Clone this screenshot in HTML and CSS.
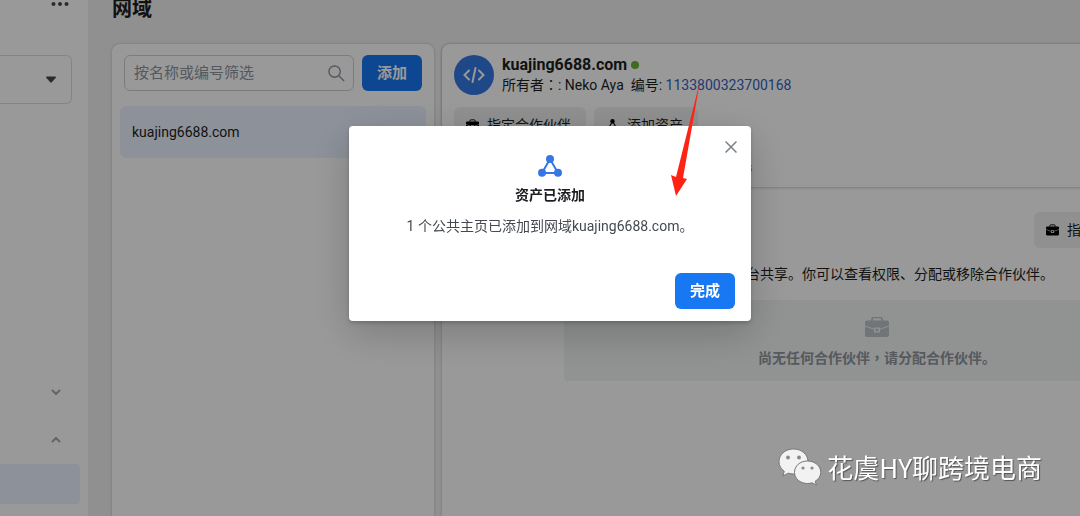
FILE: index.html
```html
<!DOCTYPE html>
<html lang="zh-CN">
<head>
<meta charset="utf-8">
<title>网域</title>
<link rel="stylesheet" href="styles.css">
</head>
<body>
<svg class="symbols" aria-hidden="true">
  <symbol id="briefcase" viewBox="0 0 24 20">
    <path d="M7 4V2.600Q7 .5 9 .5h6q2 0 2 2.100V4" fill="none" stroke="currentColor" stroke-width="1.700"/>
    <path d="M2 3.500h20q2 0 2 2V8.500l-9 3.300v-1.300H9v1.300L0 8.500V5.500q0-2 2-2z"/>
    <path d="M0 9.500l9 3.300V15.500h6v-2.700l9-3.300V18q0 2-2 2H2q-2 0-2-2z"/>
    <path d="M10.500 11.800h3v2.400h-3z"/>
  </symbol>
  <symbol id="nodes" viewBox="0 0 24 22">
    <path d="M12 4L4 18h16z" fill="none" stroke="currentColor" stroke-width="2"/>
    <circle cx="12" cy="4" r="4"/><circle cx="4" cy="17.800" r="4"/><circle cx="20" cy="17.800" r="4"/>
  </symbol>
</svg>
<div class="app">
  <nav class="sidebar">
    <button class="icon-button more" aria-label="更多"><svg width="18" height="6" viewBox="0 0 18 6"><circle cx="2.500" cy="3" r="2"/><circle cx="9" cy="3" r="2"/><circle cx="15.500" cy="3" r="2"/></svg></button>
    <button class="account" aria-label="选择账户"><svg width="10" height="7" viewBox="0 0 10 7"><path d="M1 .5h8q1 0 1 1L6 6Q5 7 4 6L0 1.500q0-1 1-1z"/></svg></button>
    <div class="groups">
      <button class="icon-button group" aria-label="展开"><svg width="10" height="6" viewBox="0 0 10 6"><path d="M1 1l4 4 4-4"/></svg></button>
      <button class="icon-button group" aria-label="收起"><svg width="10" height="6" viewBox="0 0 10 6"><path d="M1 5l4-4 4 4"/></svg></button>
      <a class="current" href="#" aria-label="网域"></a>
    </div>
  </nav>
  <main class="main">
    <h1 class="page-title">网域</h1>
    <div class="columns">
      <section class="card list">
        <div class="tools">
          <label class="search">
            <input type="text" placeholder="按名称或编号筛选" aria-label="按名称或编号筛选">
            <svg width="17" height="17" viewBox="0 0 18 18"><circle cx="7" cy="7" r="6"/><path d="M11.500 11.500L17 17"/></svg>
          </label>
          <button class="primary">添加</button>
        </div>
        <a class="domain" href="#">kuajing6688.com</a>
      </section>
      <section class="card detail">
        <header class="detail-header">
          <div class="identity">
            <div class="avatar"><svg width="22" height="18" viewBox="0 0 22 18"><path d="M6 4.500L1.500 9 6 13.500M16 4.500L20.500 9 16 13.500M12.500 2l-3 14"/></svg></div>
            <div>
              <h2 class="name">kuajing6688.com<span class="status"></span></h2>
              <p class="meta">所有者<span class="mid" lang="zh-TW">：</span>: Neko Aya&nbsp; 编号: <a href="#">1133800323700168</a></p>
            </div>
          </div>
          <div class="actions">
            <button class="secondary"><svg width="13" height="12"><use href="#briefcase"/></svg>指定合作伙伴</button>
            <button class="secondary"><svg width="13" height="12"><use href="#nodes"/></svg>添加资产</button>
          </div>
          <a class="more-link" href="#">s</a>
        </header>
        <div class="partners">
          <button class="secondary assign"><svg width="13" height="12"><use href="#briefcase"/></svg>指定合作伙伴</button>
          <p class="hint">台共享。你可以查看权限、分配或移除合作伙伴。</p>
          <div class="empty"><svg width="24" height="20"><use href="#briefcase"/></svg><p>尚无任何合作伙伴<span class="mid" lang="zh-TW">，</span>请分配合作伙伴。</p></div>
        </div>
      </section>
    </div>
  </main>
</div>
<div class="overlay">
  <div class="dialog" role="dialog" aria-labelledby="dialog-title">
    <button class="icon-button close" aria-label="关闭"><svg width="12" height="12" viewBox="0 0 12 12"><path d="M.5.5l11 11M11.500.5l-11 11"/></svg></button>
    <svg class="dialog-icon" width="24" height="22"><use href="#nodes"/></svg>
    <h2 id="dialog-title">资产已添加</h2>
    <p>1 个公共主页已添加到网域kuajing6688.com。</p>
    <button class="primary done">完成</button>
  </div>
</div>
<svg class="arrow" width="32" height="116" viewBox="0 0 32 116" aria-hidden="true"><path d="M31 0L14 97l4 1-11 17L2 94l5 2z"/></svg>
<div class="watermark">
  <svg width="44" height="38" viewBox="0 0 44 38" aria-hidden="true">
    <path class="bubble" d="M15.500 1C7 1 1 6.700 1 13.700c0 4 2 7.300 5.300 9.600L4.800 28l5.500-2.800c1.700.5 3.400.8 5.200.8C24 26 30 20.700 30 13.700S24 1 15.500 1z"/>
    <circle class="eye" cx="10" cy="9.500" r="1.900"/><circle class="eye" cx="21" cy="9.500" r="1.900"/>
    <path class="bubble" d="M29.500 13C22 13 16.500 18 16.500 24.300s5.500 11.200 13 11.200c1.700 0 3.200-.2 4.600-.7l4.300 2.400-1.200-4c3.400-2 5.600-5.200 5.600-8.900C42.800 18 37 13 29.500 13z"/>
    <circle class="eye" cx="25" cy="20" r="1.600"/><circle class="eye" cx="34" cy="20" r="1.600"/>
  </svg>
  <span>花虞HY聊跨境电商</span>
</div>
</body>
</html>
```
FILE: styles.css
```css
* { box-sizing: border-box; }
body {
  margin: 0;
  height: 100vh;
  overflow: hidden;
  background: #f0f0f0;
  color: #1c1e21;
  font: 14px/20px Roboto, "Noto Sans CJK SC", sans-serif;
}
h1, h2, p { margin: 0; }
button, input { font: inherit; color: inherit; }
button { white-space: nowrap; }
a { color: #385898; text-decoration: none; }
svg { flex: none; fill: currentColor; }
.symbols { position: absolute; width: 0; height: 0; }
.app { display: flex; height: 100%; overflow: hidden; }

.sidebar {
  flex: none;
  display: flex;
  flex-direction: column;
  width: 88px;
  padding-right: 8px;
  background: #fff;
}
.icon-button { display: flex; padding: 0; border: 0; background: none; }
.more { align-self: flex-end; margin: 1px 11px 48px 0; color: #444950; }
.account {
  display: flex;
  align-items: center;
  justify-content: flex-end;
  height: 49px;
  margin-right: 8px;
  padding: 0 15px;
  border: 1px solid #dadde1;
  border-left: 0;
  border-radius: 0 6px 6px 0;
  background: #fff;
  color: #444950;
}
.groups { display: flex; flex-direction: column; margin-top: 264px; }
.group { align-items: center; justify-content: flex-end; height: 48px; padding-right: 19px; }
.group path { fill: none; stroke: #a4a8ae; stroke-width: 2; }
.current { height: 40px; border-radius: 0 4px 4px 0; background: #ebf2ff; }

.main {
  flex: 1 0 auto;
  width: calc(100% + 34px);
  display: flex;
  flex-direction: column;
  gap: 23px;
  padding-left: 24px;
  margin-top: -3px;
}
.page-title { font-size: 20px; line-height: 24px; }
.columns { flex: 1; display: flex; gap: 8px; }
.card { border-radius: 8px 8px 0 0; background: #fff; box-shadow: 0 0 3px rgba(0, 0, 0, .2); }
.list { width: 322px; padding: 11px 8px; }
.tools { display: flex; gap: 8px; padding: 0 4px 15px; }
.search {
  flex: 1;
  min-width: 0;
  display: flex;
  align-items: center;
  height: 36px;
  padding: 0 8px 0 9px;
  border: 1px solid #ccd0d5;
  border-radius: 6px;
}
.search input { flex: 1; min-width: 0; padding: 0; border: 0; outline: 0; background: none; font-size: 15px; }
.search input::placeholder { color: #8d949e; }
.search path, .search circle { fill: none; stroke: #8d949e; stroke-width: 1.500; }
.primary {
  flex: none;
  height: 36px;
  padding: 0 15px;
  border: 0;
  border-radius: 6px;
  background: #1877f2;
  color: #fff;
  font-size: 15px;
  font-weight: 700;
}
.domain {
  display: block;
  padding: 16px 12px;
  border-radius: 6px;
  background: #ebf2ff;
  color: #1c1e21;
}

.detail { flex: 1; }
.detail-header { padding: 11px 12px 10px; border-radius: 8px 8px 0 0; box-shadow: 0 1px 3px rgba(0, 0, 0, .2); }
.identity { display: flex; gap: 8px; }
.avatar {
  display: flex;
  align-items: center;
  justify-content: center;
  width: 40px;
  height: 40px;
  border-radius: 50%;
  background: #3578e5;
}
.avatar path { fill: none; stroke: #fff; stroke-width: 2; stroke-linecap: round; }
.name { display: flex; align-items: center; gap: 4px; font-size: 16px; font-weight: 700; }
.meta a { color: #365fc0; }
.mid { font-family: "Noto Sans CJK TC", sans-serif; line-height: 1; }
.status { width: 8px; height: 8px; border-radius: 50%; background: #69b33a; }
.actions { display: flex; gap: 8px; padding: 12px 0 14px; }
.secondary {
  display: flex;
  align-items: center;
  gap: 8px;
  height: 36px;
  padding: 0 15px 0 12px;
  border: 0;
  border-radius: 6px;
  background: #f0f0f0;
}
.secondary svg { color: #000; }
.more-link { display: block; margin-left: 291px; }
.partners { display: flex; flex-direction: column; padding: 25px 12px 0 122px; }
.assign { align-self: flex-end; margin-right: 24px; }
.hint { padding: 16px 0 16px 182px; }
.empty {
  display: flex;
  flex-direction: column;
  align-items: center;
  gap: 11px;
  padding: 17px 0 13px;
  border-radius: 4px;
  background: #f1f5f4;
  color: #90949c;
  font-weight: 700;
}
.empty svg { color: #bec3c9; }

.overlay {
  position: fixed;
  inset: 0;
  display: flex;
  align-items: flex-start;
  justify-content: center;
  padding: 126px 0 0 20px;
  background: rgba(0, 0, 0, .4);
}
.dialog {
  position: relative;
  display: flex;
  flex-direction: column;
  align-items: center;
  width: 402px;
  padding: 29px 16px 12px;
  border-radius: 4px;
  background: #fff;
  box-shadow: 0 2px 4px rgba(0, 0, 0, .2), 0 12px 40px rgba(0, 0, 0, .2);
}
.dialog h2 { padding: 8px 0 11px; font-size: 14px; }
.dialog p { color: #444950; }
.dialog-icon { color: #3578e5; }
.close { position: absolute; top: 15px; right: 14px; }
.close path { stroke: #7b8087; stroke-width: 1.500; }
.done { align-self: flex-end; margin-top: 37px; }

.arrow { position: absolute; left: 669px; top: 81px; color: #ff2314; }
.watermark {
  position: absolute;
  right: 38px;
  bottom: 30px;
  display: flex;
  align-items: center;
  gap: 5px;
  color: #fff;
  font: 400 26px/38px "Noto Sans CJK SC", sans-serif;
  text-shadow: 1px 1px 1px #555;
}
.bubble { fill: #f2f2f2; stroke: #777; stroke-width: 1; }
.eye { fill: #888; }
```
